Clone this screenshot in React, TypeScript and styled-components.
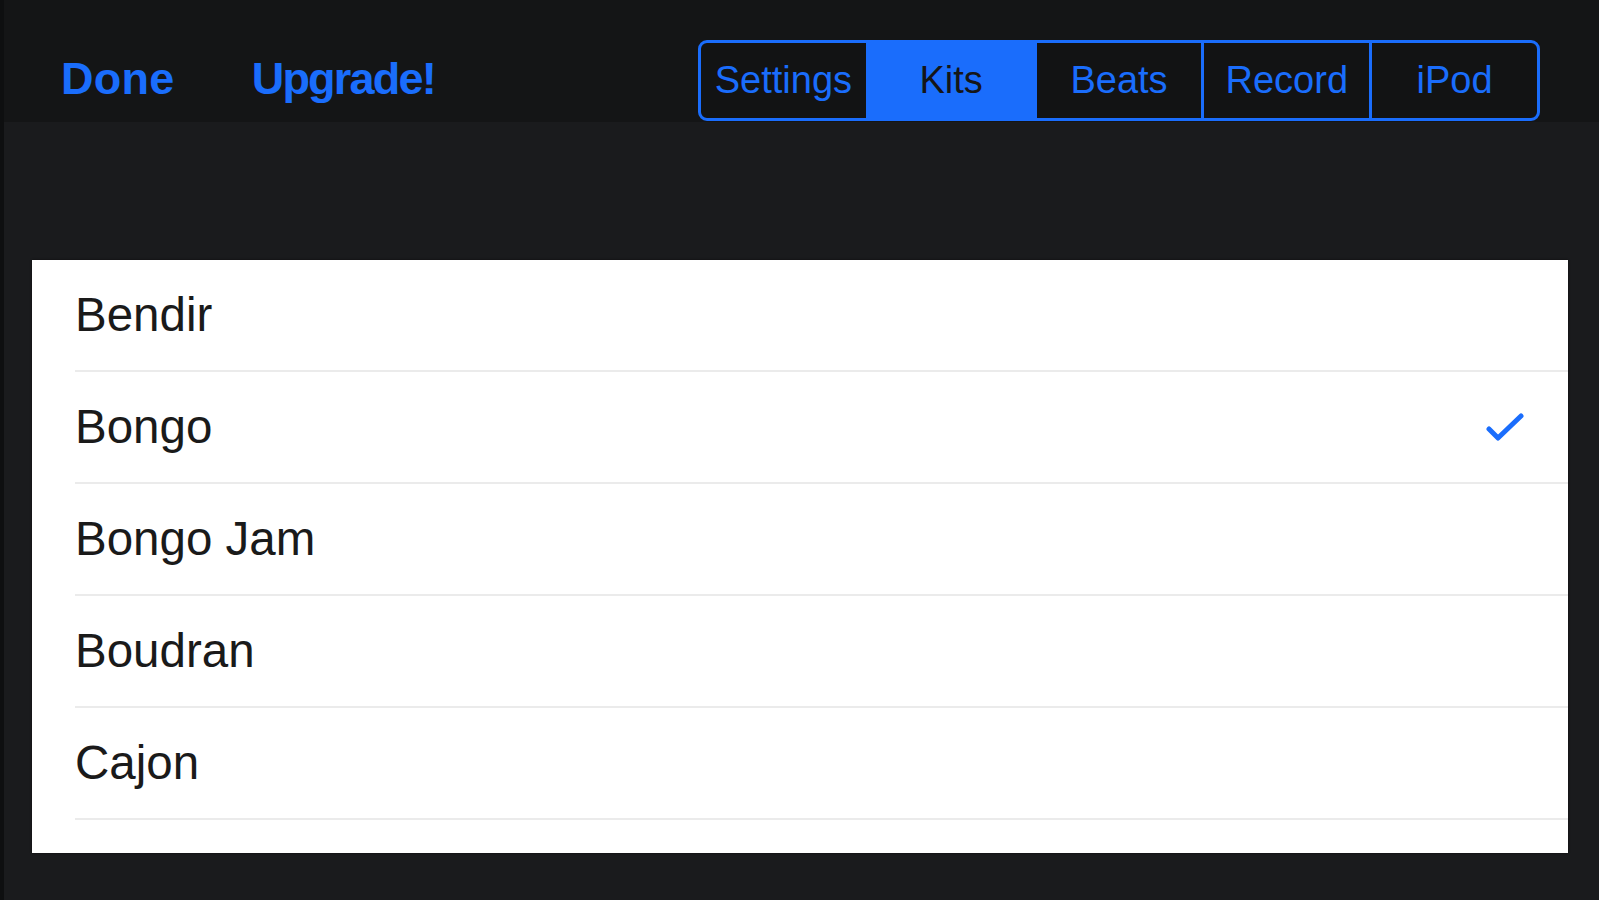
import React from "react";
import styled, { createGlobalStyle } from "styled-components";

const GlobalStyle = createGlobalStyle`
  html, body {
    margin: 0;
    padding: 0;
    background: #1a1b1d;
  }
  * { box-sizing: border-box; }
`;

const BLUE = "#1a6dfc";

const Page = styled.div`
  width: 100%;
  min-height: 900px;
  background: #1a1b1d;
  border-left: 4px solid #0e0f10;
  font-family: "Liberation Sans", Arial, sans-serif;
`;

const Header = styled.header`
  height: 122px;
  background: #141516;
  display: flex;
  align-items: flex-start;
  padding: 40px 59px 0 57px;
`;

const NavGroup = styled.nav`
  height: 80px;
  display: flex;
  align-items: center;
  gap: 77px;
`;

const NavButton = styled.span<{ $tight?: boolean }>`
  color: ${BLUE};
  font-weight: 700;
  font-size: 45px;
  letter-spacing: ${(p) => (p.$tight ? "-1.8px" : "0.3px")};
  line-height: 1;
  margin-top: -4px;
`;

const Segmented = styled.div`
  margin-left: auto;
  width: 842px;
  height: 81px;
  display: flex;
  border: 3px solid ${BLUE};
  border-radius: 9px;
  overflow: hidden;
  background: #121314;
`;

const Segment = styled.div<{ $active?: boolean }>`
  flex: 1;
  display: flex;
  align-items: center;
  justify-content: center;
  font-size: 38px;
  color: ${(p) => (p.$active ? "#151617" : BLUE)};
  background: ${(p) => (p.$active ? BLUE : "transparent")};
  & + & {
    border-left: 3px solid ${BLUE};
  }
`;

const Body = styled.main`
  padding: 138px 31px 0 28px;
`;

const Panel = styled.section`
  background: #ffffff;
  height: 593px;
  box-shadow: 0 0 2px rgba(0, 0, 0, 0.6);
  display: flex;
  flex-direction: column;
`;

const Row = styled.div`
  margin-left: 43px;
  height: 112px;
  border-bottom: 2px solid #ebebeb;
  display: flex;
  align-items: center;
  justify-content: space-between;
  padding-right: 44px;
`;

const RowLabel = styled.span`
  font-size: 47.5px;
  color: #1a1a1a;
  line-height: 1;
`;

const Check = styled.svg`
  width: 38px;
  height: 30px;
`;

const segments = ["Settings", "Kits", "Beats", "Record", "iPod"];
const kits = ["Bendir", "Bongo", "Bongo Jam", "Boudran", "Cajon"];
const selected = "Bongo";

export default function App() {
  return (
    <>
      <GlobalStyle />
      <Page>
        <Header>
          <NavGroup>
            <NavButton>Done</NavButton>
            <NavButton $tight>Upgrade!</NavButton>
          </NavGroup>
          <Segmented>
            {segments.map((s) => (
              <Segment key={s} $active={s === "Kits"}>
                {s}
              </Segment>
            ))}
          </Segmented>
        </Header>
        <Body>
          <Panel>
            {kits.map((k) => (
              <Row key={k}>
                <RowLabel>{k}</RowLabel>
                {k === selected && (
                  <Check viewBox="0 0 38 30">
                    <polyline
                      points="3,17 12,26 35,4"
                      fill="none"
                      stroke={BLUE}
                      strokeWidth={5}
                      strokeLinecap="round"
                      strokeLinejoin="round"
                    />
                  </Check>
                )}
              </Row>
            ))}
          </Panel>
        </Body>
      </Page>
    </>
  );
}
